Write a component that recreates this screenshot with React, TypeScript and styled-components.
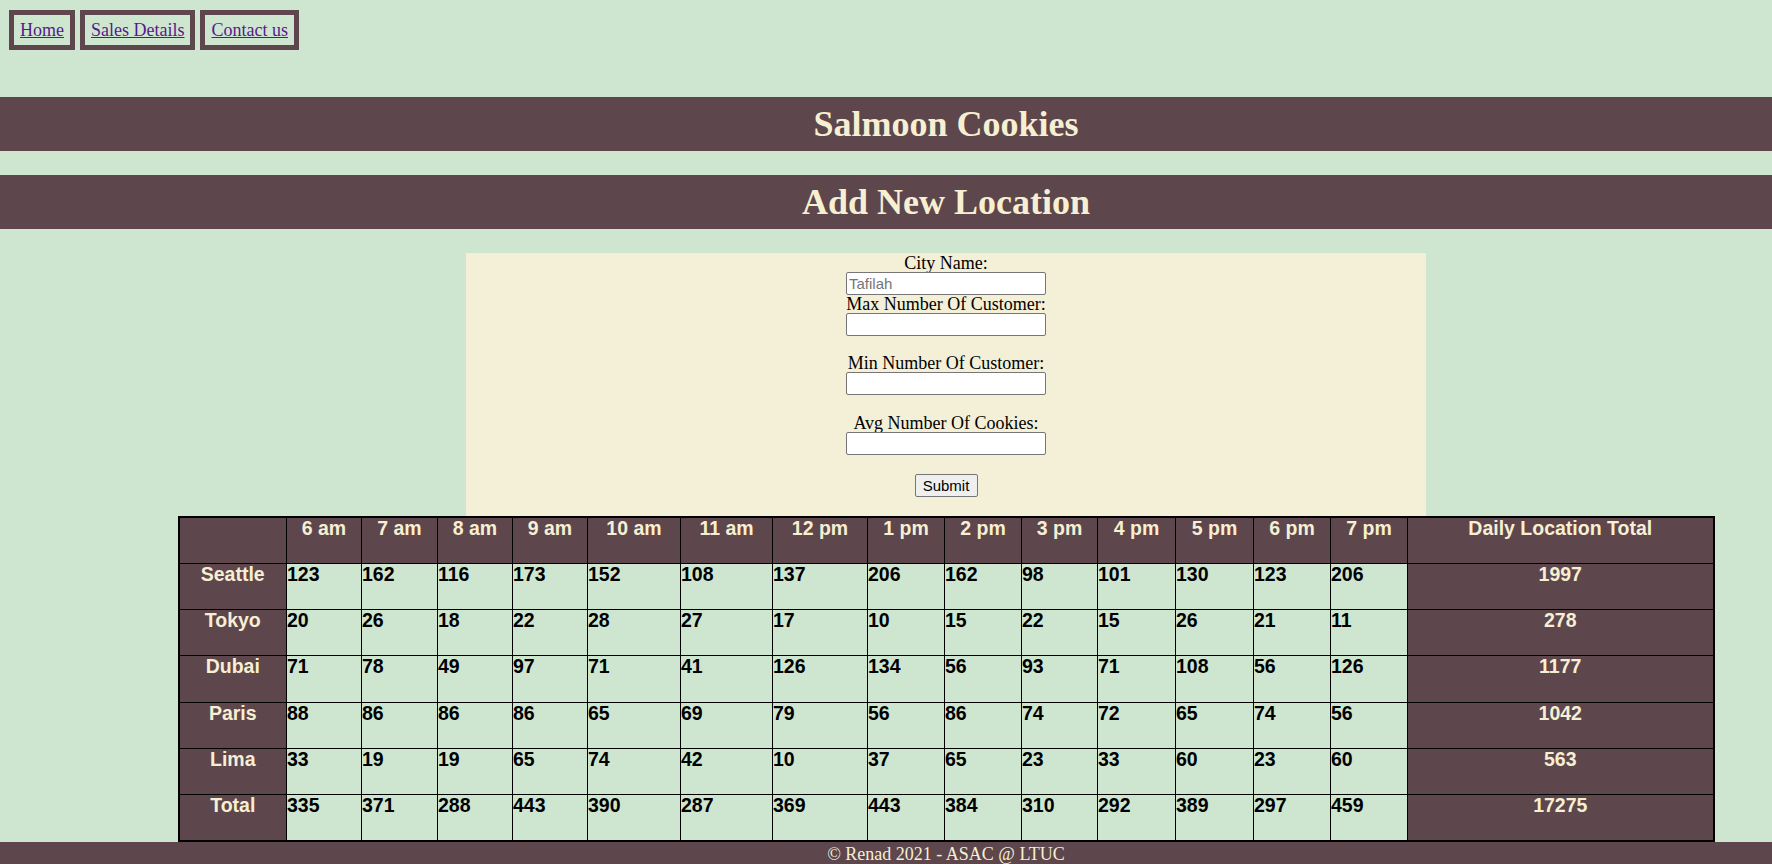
import React from "react";
import styled, { createGlobalStyle } from "styled-components";

const DARK = "#5d464c";
const GREEN = "#cee6d0";
const CREAM = "#f7efd2";
const FORM_BG = "#f4efd7";

const GlobalStyle = createGlobalStyle`
  html, body {
    margin: 0;
    padding: 0;
    background: ${GREEN};
    font-family: "Liberation Serif", "Times New Roman", serif;
    font-size: 18px;
  }
  * { box-sizing: border-box; }
`;

const Page = styled.div`
  width: 1772px;
  min-height: 864px;
  display: flex;
  flex-direction: column;
`;

const Nav = styled.nav`
  display: flex;
  gap: 5px;
  padding: 10px 0 0 9px;
`;

const NavItem = styled.div`
  border: 5px solid ${DARK};
  padding: 5px 6px;
  line-height: 20px;
`;

const NavLink = styled.a`
  color: #551a8b;
  text-decoration: underline;
  font-size: 18px;
`;

const Band = styled.h1<{ $top: number }>`
  margin: ${(p) => p.$top}px 0 0 0;
  height: 54px;
  line-height: 54px;
  padding-left: 120px;
  background: ${DARK};
  color: ${CREAM};
  text-align: center;
  font-size: 36px;
  font-weight: bold;
`;

const Content = styled.main`
  padding-left: 120px;
  display: flex;
  flex-direction: column;
  align-items: center;
`;

const Form = styled.form`
  width: 960px;
  margin-top: 24px;
  background: ${FORM_BG};
  padding: 1px 0 19px;
  display: flex;
  flex-direction: column;
  align-items: center;
`;

const Field = styled.div<{ $gap: number }>`
  margin-top: ${(p) => p.$gap}px;
  display: flex;
  flex-direction: column;
  align-items: center;
`;

const Label = styled.label`
  font-size: 18px;
  line-height: 18px;
  height: 18px;
  color: #000;
`;

const Input = styled.input`
  width: 200px;
  height: 23px;
  border: 1px solid #767676;
  border-radius: 2px;
  padding: 1px 2px;
  background: #fff;
  font-family: "Liberation Sans", Arial, sans-serif;
  font-size: 15px;
  &::placeholder {
    color: #757575;
  }
`;

const SubmitButton = styled.button`
  margin-top: 19px;
  width: 63px;
  height: 23px;
  padding: 0;
  border: 1px solid #767676;
  border-radius: 2px;
  background: #efefef;
  color: #000;
  font-family: "Liberation Sans", Arial, sans-serif;
  font-size: 15px;
`;

const Table = styled.table`
  width: 1535px;
  table-layout: fixed;
  border-collapse: collapse;
  border: 2px solid #000;
  font-family: "Liberation Sans", Arial, sans-serif;
  font-size: 19.5px;
  line-height: 20px;
  font-weight: bold;
`;

const Row = styled.tr`
  height: 46.3px;
`;

const HeadCell = styled.th`
  background: ${DARK};
  color: ${CREAM};
  border: 1px solid #000;
  text-align: center;
  vertical-align: top;
  padding: 0;
  font-weight: bold;
`;

const DataCell = styled.td`
  background: ${GREEN};
  color: #000;
  border: 1px solid #000;
  text-align: left;
  vertical-align: top;
  padding: 0;
`;

const Footer = styled.footer`
  height: 24px;
  line-height: 24px;
  background: ${DARK};
  color: ${CREAM};
  text-align: center;
  padding-left: 120px;
  font-size: 18px;
`;

const hours = ["6 am", "7 am", "8 am", "9 am", "10 am", "11 am", "12 pm", "1 pm", "2 pm", "3 pm", "4 pm", "5 pm", "6 pm", "7 pm"];
const colWidths = [108, 75, 76, 75, 75, 93, 92, 95, 77, 77, 76, 78, 78, 77, 77, 306];

const rows: { name: string; values: number[]; total: number }[] = [
  { name: "Seattle", values: [123, 162, 116, 173, 152, 108, 137, 206, 162, 98, 101, 130, 123, 206], total: 1997 },
  { name: "Tokyo", values: [20, 26, 18, 22, 28, 27, 17, 10, 15, 22, 15, 26, 21, 11], total: 278 },
  { name: "Dubai", values: [71, 78, 49, 97, 71, 41, 126, 134, 56, 93, 71, 108, 56, 126], total: 1177 },
  { name: "Paris", values: [88, 86, 86, 86, 65, 69, 79, 56, 86, 74, 72, 65, 74, 56], total: 1042 },
  { name: "Lima", values: [33, 19, 19, 65, 74, 42, 10, 37, 65, 23, 33, 60, 23, 60], total: 563 },
];
const totals = [335, 371, 288, 443, 390, 287, 369, 443, 384, 310, 292, 389, 297, 459];

export default function App() {
  return (
    <>
      <GlobalStyle />
      <Page>
        <Nav>
          <NavItem><NavLink href="#">Home</NavLink></NavItem>
          <NavItem><NavLink href="#">Sales Details</NavLink></NavItem>
          <NavItem><NavLink href="#">Contact us</NavLink></NavItem>
        </Nav>
        <Band $top={47}>Salmoon Cookies</Band>
        <Band $top={24}>Add New Location</Band>
        <Content>
          <Form onSubmit={(e) => e.preventDefault()}>
            <Field $gap={0}>
              <Label>City Name:</Label>
              <Input type="text" placeholder="Tafilah" />
            </Field>
            <Field $gap={0}>
              <Label>Max Number Of Customer:</Label>
              <Input type="number" />
            </Field>
            <Field $gap={18}>
              <Label>Min Number Of Customer:</Label>
              <Input type="number" />
            </Field>
            <Field $gap={19}>
              <Label>Avg Number Of Cookies:</Label>
              <Input type="number" />
            </Field>
            <SubmitButton type="submit">Submit</SubmitButton>
          </Form>
          <Table>
            <colgroup>
              {colWidths.map((w, i) => (
                <col key={i} style={{ width: w }} />
              ))}
            </colgroup>
            <thead>
              <Row>
                <HeadCell></HeadCell>
                {hours.map((h) => (
                  <HeadCell key={h}>{h}</HeadCell>
                ))}
                <HeadCell>Daily Location Total</HeadCell>
              </Row>
            </thead>
            <tbody>
              {rows.map((r) => (
                <Row key={r.name}>
                  <HeadCell>{r.name}</HeadCell>
                  {r.values.map((v, i) => (
                    <DataCell key={i}>{v}</DataCell>
                  ))}
                  <HeadCell>{r.total}</HeadCell>
                </Row>
              ))}
              <Row>
                <HeadCell>Total</HeadCell>
                {totals.map((v, i) => (
                  <DataCell key={i}>{v}</DataCell>
                ))}
                <HeadCell>17275</HeadCell>
              </Row>
            </tbody>
          </Table>
        </Content>
        <Footer>© Renad 2021 - ASAC @ LTUC</Footer>
      </Page>
    </>
  );
}
